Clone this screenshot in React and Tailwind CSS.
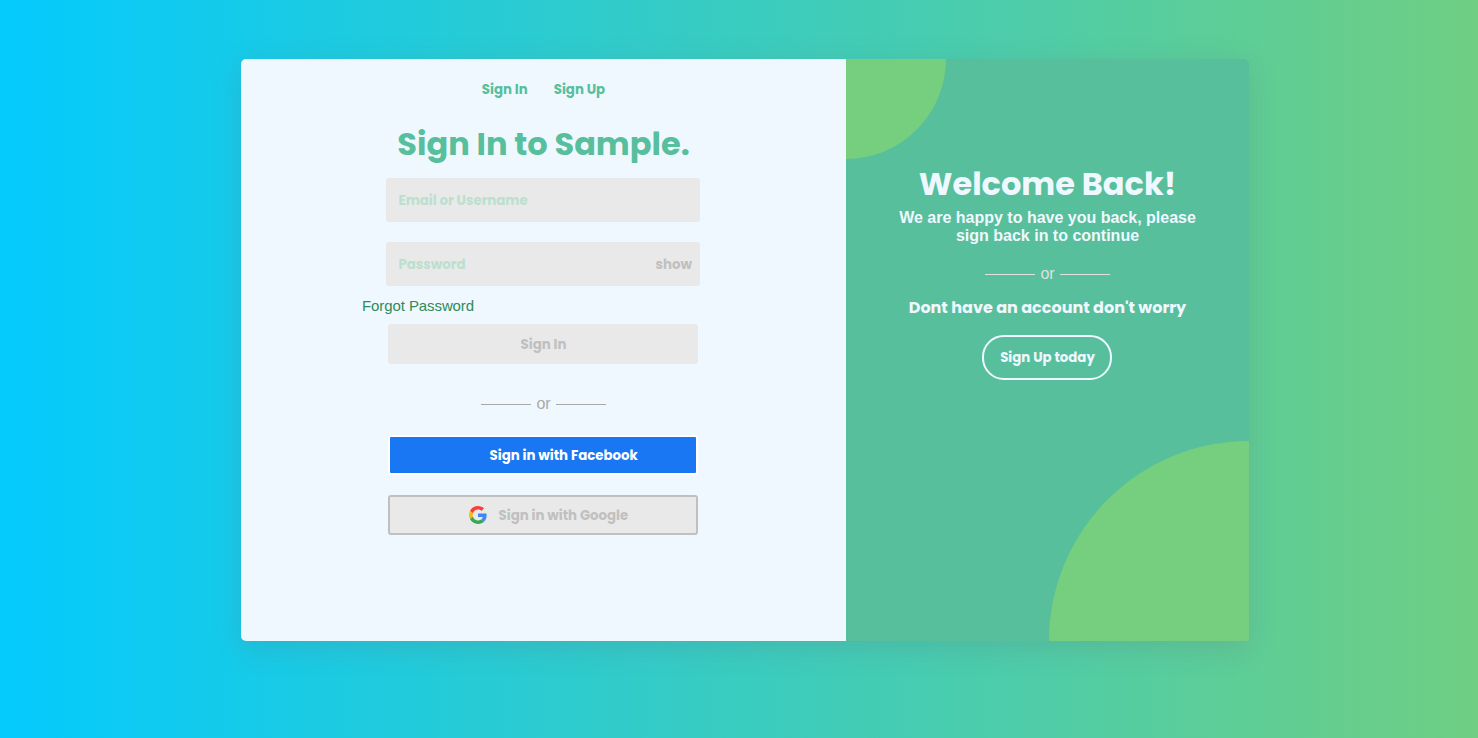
const poppins = "font-['Poppins','Inter',sans-serif] font-bold whitespace-nowrap";

function T({ className = "", children }) {
  return <span className={`${poppins} ${className}`}>{children}</span>;
}

function Divider({ className }) {
  return (
    <div className={`flex h-5 items-center justify-center gap-[5px] text-base leading-5 ${className}`}>
      <span className="mt-px h-px w-[50px] bg-current" />
      <span>or</span>
      <span className="mt-px h-px w-[50px] bg-current" />
    </div>
  );
}

function GoogleLogo({ className }) {
  return (
    <svg viewBox="0 0 48 48" className={className}>
      <path fill="#F44336" d="M24 9.5c3.54 0 6.71 1.22 9.21 3.6l6.85-6.85C35.9 2.38 30.47 0 24 0 14.62 0 6.51 5.38 2.56 13.22l7.98 6.19C12.43 13.72 17.74 9.5 24 9.5z" />
      <path fill="#4285F4" d="M46.98 24.55c0-1.57-.15-3.09-.38-4.55H24v9.02h12.94c-.58 2.96-2.26 5.48-4.78 7.18l7.73 6c4.51-4.18 7.09-10.36 7.09-17.65z" />
      <path fill="#FBBC05" d="M10.53 28.59c-.48-1.45-.76-2.99-.76-4.59s.27-3.14.76-4.59l-7.98-6.19C.92 16.46 0 20.12 0 24c0 3.88.92 7.54 2.56 10.78l7.97-6.19z" />
      <path fill="#34A853" d="M24 48c6.48 0 11.93-2.13 15.89-5.81l-7.73-6c-2.15 1.45-4.92 2.3-8.16 2.3-6.26 0-11.57-4.22-13.47-9.91l-7.98 6.19C6.51 42.62 14.62 48 24 48z" />
    </svg>
  );
}

export default function App() {
  return (
    <div className="h-[738px] w-full bg-linear-to-r/srgb from-[#04cafd] to-[#6fce83] pt-[59px] pl-[241px] font-['Liberation_Sans',Arial,sans-serif]">
      <main className="flex h-[582px] w-[1008px] rounded-[5px] shadow-[0_7px_29px_0_rgba(100,100,111,0.2)]">
        <section className="flex w-[605px] flex-col items-center rounded-l-[5px] bg-[#f0f8ff] pt-[21px] text-[#57bf9c]">
          <nav className="flex h-5 items-center gap-[26px] text-[13.33px]">
            <T>Sign In</T>
            <T>Sign Up</T>
          </nav>
          <h1 className="mt-5 flex h-12 items-center text-[32px]"><T>Sign In to Sample.</T></h1>
          <div className="mt-2.5 mr-px flex h-11 w-[314px] items-center rounded-[3px] bg-[#e9e9e9] pt-0.5 pl-[12.5px] text-[13.33px] text-[#bcdfd0]"><T>Email or Username</T></div>
          <div className="mt-5 mr-px flex h-11 w-[314px] items-center justify-between rounded-[3px] bg-[#e9e9e9] pt-0.5 pr-2 pl-[12.5px] text-[13.33px] text-[#bcdfd0]">
            <T>Password</T>
            <T className="text-[#c0c0c0]">show</T>
          </div>
          <a className="mt-2.5 ml-[121px] self-start text-[15px] leading-5 tracking-[-0.09px] text-[#2e8b57]">Forgot Password</a>
          <button className="mt-2 mr-px flex h-10 w-[310px] items-center justify-center rounded-[3px] bg-[#e9e9e9] pt-0.5 pl-px text-[13.33px] text-[#c0c0c0]"><T>Sign In</T></button>
          <Divider className="mt-[30px] text-[#a9a9a9]" />
          <button className="mt-[21px] mr-px flex h-10 w-[310px] items-center rounded-[3px] border-2 border-white bg-[#1977f3] pt-0.5 pl-[99.5px] text-[13.33px] text-white"><T>Sign in with Facebook</T></button>
          <button className="mt-5 mr-px flex h-10 w-[310px] items-center rounded-[3px] border-2 border-[#c0c0c0] bg-[#e9e9e9] pl-[79px] text-[13.33px] text-[#c0c0c0]">
            <GoogleLogo className="mr-[11.5px] size-[18px]" />
            <T className="pt-0.5">Sign in with Google</T>
          </button>
        </section>
        <section className="relative flex w-[403px] flex-col items-center rounded-tr-[5px] bg-[#57bf9c] pt-[101px] text-[#f0f8ff]">
          <span className="absolute top-0 left-0 size-[100px] rounded-br-full bg-[#76cf7e]" />
          <span className="absolute right-0 bottom-0 size-[200px] rounded-tl-full bg-[#76cf7e]" />
          <h2 className="flex h-12 items-center text-[32px]"><T>Welcome Back!</T></h2>
          <p className="mt-px w-[320px] text-center text-base leading-[18px] font-bold">We are happy to have you back, please<br />sign back in to continue</p>
          <Divider className="mt-[19px] text-[#e0e0e0]" />
          <p className="mt-3 flex h-6 items-center text-base"><T>Dont have an account don't worry</T></p>
          <button className="mt-[15px] mr-px flex h-[45px] w-[130px] items-center justify-center rounded-[22px] border-2 border-[#f0f8ff] pl-px text-[13.33px]"><T>Sign Up today</T></button>
        </section>
      </main>
    </div>
  );
}
